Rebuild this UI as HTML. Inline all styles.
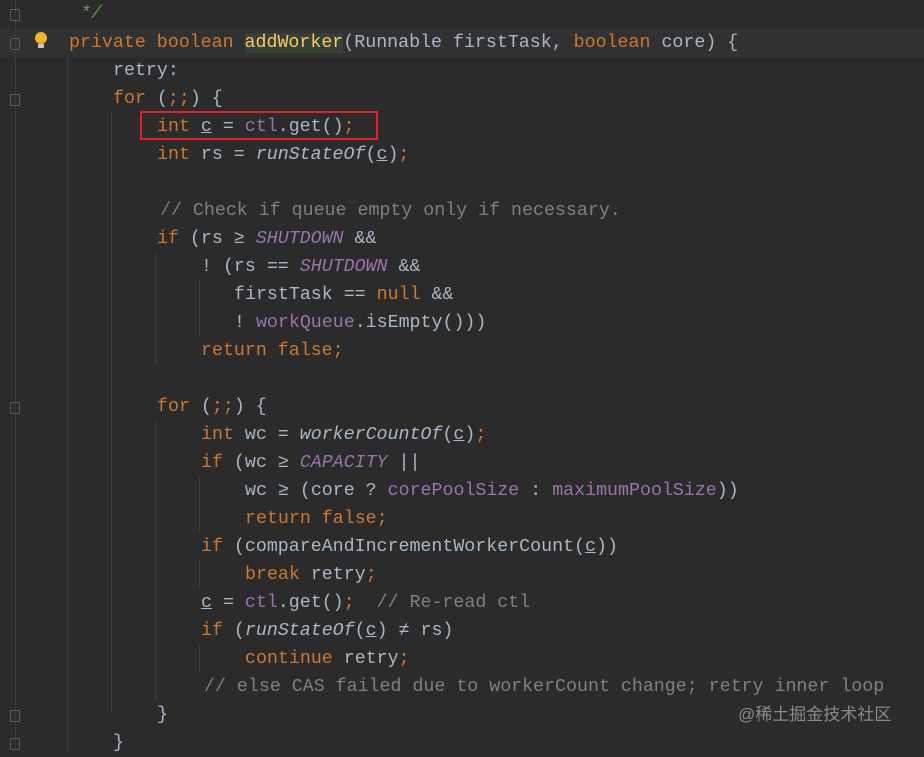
<!DOCTYPE html>
<html><head><meta charset="utf-8"><style>
body{margin:0;width:924px;height:749px;background:#2b2b2b;overflow:hidden;position:relative;font-family:"Liberation Mono",monospace;font-size:18.3px;color:#a9b7c6}
#w{position:absolute;left:0;top:2px;width:924px;height:749px}
.l{position:absolute;white-space:pre;line-height:28px;height:28px}
.k{color:#cc7832}.f{color:#9876aa}.fi{color:#9876aa;font-style:italic}.i{font-style:italic}.c{color:#808080}.g{color:#629755;font-style:italic}
.u{text-decoration:underline}
.m{color:#ffc66d;background:#344134}
.v{position:absolute;width:1px;background:#3b3b3b}
.fold{position:absolute;left:10px;width:10px;height:12px;border:1px solid #5a5a5a;box-sizing:border-box;border-radius:1px}
</style></head><body>
<div id="w">
<div style="position:absolute;left:0;top:27px;width:924px;height:28px;background:#313131"></div>
<div style="position:absolute;left:15px;top:-2px;width:1px;height:749px;background:#3a3a3a"></div>
<div class="fold" style="top:7px"></div><div class="fold" style="top:36px"></div><div class="fold" style="top:92px"></div><div class="fold" style="top:400px"></div><div class="fold" style="top:708px"></div><div class="fold" style="top:736px"></div>
<div style="position:absolute;left:35px;top:30px;width:12px;height:12px;border-radius:50%;background:#f0b429"></div>
<div style="position:absolute;left:38px;top:42px;width:6px;height:4px;background:#c9c9c9"></div>
<div class="v" style="left:67px;top:55px;height:694px"></div>
<div class="v" style="left:111px;top:111px;height:600px"></div>
<div class="v" style="left:155px;top:251px;height:112px"></div>
<div class="v" style="left:199px;top:279px;height:56px"></div>
<div class="v" style="left:155px;top:419px;height:280px"></div>
<div class="v" style="left:199px;top:475px;height:56px"></div>
<div class="v" style="left:199px;top:559px;height:28px"></div>
<div class="v" style="left:199px;top:643px;height:28px"></div>
<div class="l" style="left:80px;top:-2px"><span class="g">*/</span></div>
<div class="l" style="left:69px;top:27px"><span class="k">private boolean </span><span class="m">addWorker</span>(Runnable firstTask, <span class="k">boolean </span>core) {</div>
<div class="l" style="left:113px;top:55px">retry:</div>
<div class="l" style="left:113px;top:83px"><span class="k">for </span>(<span class="k">;;</span>) {</div>
<div class="l" style="left:157px;top:111px"><span class="k">int </span><span class="u">c</span> = <span class="f">ctl</span>.get()<span class="k">;</span></div>
<div style="position:absolute;left:140px;top:109px;width:238px;height:29px;border:2px solid #e0202a;box-sizing:border-box"></div>
<div class="l" style="left:157px;top:139px"><span class="k">int </span>rs = <span class="i">runStateOf</span>(<span class="u">c</span>)<span class="k">;</span></div>
<div class="l" style="left:160px;top:195px"><span class="c">// Check if queue empty only if necessary.</span></div>
<div class="l" style="left:157px;top:223px"><span class="k">if </span>(rs ≥ <span class="fi">SHUTDOWN</span> &amp;&amp;</div>
<div class="l" style="left:201px;top:251px">! (rs == <span class="fi">SHUTDOWN</span> &amp;&amp;</div>
<div class="l" style="left:234px;top:279px">firstTask == <span class="k">null </span>&amp;&amp;</div>
<div class="l" style="left:234px;top:307px">! <span class="f">workQueue</span>.isEmpty()))</div>
<div class="l" style="left:201px;top:335px"><span class="k">return false;</span></div>
<div class="l" style="left:157px;top:391px"><span class="k">for </span>(<span class="k">;;</span>) {</div>
<div class="l" style="left:201px;top:419px"><span class="k">int </span>wc = <span class="i">workerCountOf</span>(<span class="u">c</span>)<span class="k">;</span></div>
<div class="l" style="left:201px;top:447px"><span class="k">if </span>(wc ≥ <span class="fi">CAPACITY</span> ||</div>
<div class="l" style="left:245px;top:475px">wc ≥ (core ? <span class="f">corePoolSize</span> : <span class="f">maximumPoolSize</span>))</div>
<div class="l" style="left:245px;top:503px"><span class="k">return false;</span></div>
<div class="l" style="left:201px;top:531px"><span class="k">if </span>(compareAndIncrementWorkerCount(<span class="u">c</span>))</div>
<div class="l" style="left:245px;top:559px"><span class="k">break </span>retry<span class="k">;</span></div>
<div class="l" style="left:201px;top:587px"><span class="u">c</span> = <span class="f">ctl</span>.get()<span class="k">;</span>  <span class="c">// Re-read ctl</span></div>
<div class="l" style="left:201px;top:615px"><span class="k">if </span>(<span class="i">runStateOf</span>(<span class="u">c</span>) ≠ rs)</div>
<div class="l" style="left:245px;top:643px"><span class="k">continue </span>retry<span class="k">;</span></div>
<div class="l" style="left:204px;top:671px"><span class="c">// else CAS failed due to workerCount change; retry inner loop</span></div>
<div class="l" style="left:157px;top:699px">}</div>
<div class="l" style="left:113px;top:727px">}</div>
<div style="position:absolute;left:738px;top:702px;font-family:'Liberation Sans','Noto Sans CJK SC',sans-serif;font-size:17px;color:#8a8a8a;line-height:22px">@稀土掘金技术社区</div>
</div>
</body></html>
